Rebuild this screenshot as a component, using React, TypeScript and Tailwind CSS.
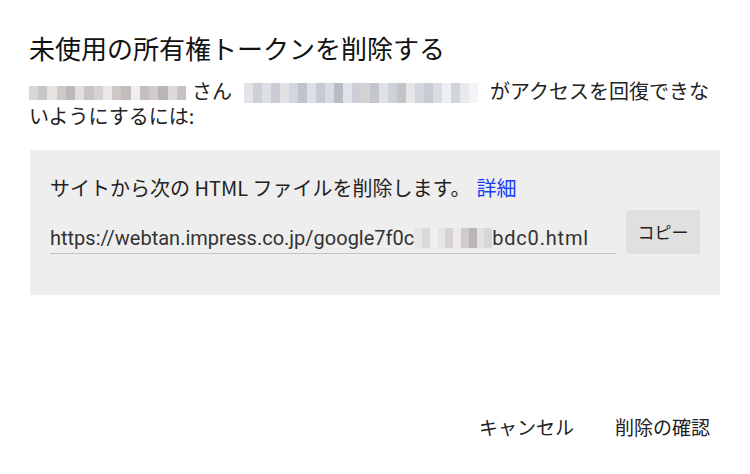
import React from "react";

const cells1 = [
  "bg-[#d9d6d6]","bg-[#c9c6c8]","bg-[#e6e3e3]","bg-[#cfc9c8]","bg-[#bdb9bb]","bg-[#e3dedc]","bg-[#c7c3c6]","bg-[#d6d2d1]","bg-[#ebe9e8]",
  "bg-[#cdc8c4]","bg-[#c2bcbf]","bg-[#f1efee]","bg-[#c4c0c2]","bg-[#d1ccca]","bg-[#b9b4b8]","bg-[#dedad9]","bg-[#c6c1c3]",
];
const cells2 = [
  "bg-[#e4e4e8]","bg-[#cfd0d6]","bg-[#dde0e6]","bg-[#c9ccd3]","bg-[#e2e1e4]","bg-[#d0d5de]","bg-[#bfc3cc]","bg-[#dcdfe5]","bg-[#c5cad4]",
  "bg-[#d8dbe1]","bg-[#b9bcc4]","bg-[#e0e3e8]","bg-[#cccfd6]","bg-[#d5d2d3]","bg-[#c3c6cd]","bg-[#dfe1e6]","bg-[#cdd1d8]","bg-[#c6c3c5]",
  "bg-[#e5e6ea]","bg-[#d2d5dc]","bg-[#c8cbd2]","bg-[#dadde3]","bg-[#eef0f3]","bg-[#d1d4db]","bg-[#e8e9ec]","bg-[#f3f4f6]",
];
const cells3 = [
  "bg-[#e8e6e6]","bg-[#dcd9d9]","bg-[#f0efef]","bg-[#e6e4e4]","bg-[#d6d2d3]","bg-[#ebe9e9]","bg-[#cfcbcc]","bg-[#b9b5b7]","bg-[#e3e1e1]","bg-[#d8d5d6]",
];

function Mosaic({ cells, cls }: { cells: string[]; cls: string }) {
  return (
    <span className={`inline-flex ${cls}`}>
      {cells.map((c, i) => (
        <span key={i} className={`flex-1 h-full ${c}`} />
      ))}
    </span>
  );
}

export default function App() {
  const jp = { fontFamily: '"Noto Sans CJK JP", "Noto Sans", sans-serif' };
  return (
    <div className="w-[750px] h-[474px] bg-white flex flex-col text-[#202124]" style={jp}>
      <div className="pl-[29px] pr-[30px] pt-[30px]">
        <h1 className="text-[26px] leading-[36px] font-normal text-[#111]">
          未使用の所有権トークンを削除する
        </h1>
        <p className="mt-[12px] text-[20px] leading-[25px] text-[#222]">
          <Mosaic cells={cells1} cls="w-[157px] h-[14px] align-[-1px]" />
          <span className="ml-[6px]">さん</span>
          <Mosaic cells={cells2} cls="w-[234px] h-[20px] align-[-4px] ml-[12px] mr-[12px]" />
          がアクセスを回復できないようにするには:
        </p>
      </div>
      <div className="mt-[22px] mx-[30px] h-[145px] bg-[#eeeeee] pl-[20px] pr-[20px] pt-[24px]">
        <p className="text-[20px] leading-[28px] text-[#222]">
          サイトから次の HTML ファイルを削除します。
          <span className="ml-[6px] text-[#1a3cf5]">詳細</span>
        </p>
        <div className="mt-[8px] flex items-start gap-[10px]">
          <div className="w-[566px] border-b border-[#c2c2c2] pt-[15px] pb-[2px]">
            <span
              className="text-[20px] leading-[26px] text-[#333] whitespace-nowrap"
              style={{ fontFamily: 'Roboto, "Liberation Sans", sans-serif' }}
            >
              https://webtan.impress.co.jp/google7f0c
              <Mosaic cells={cells3} cls="w-[78px] h-[20px] align-[-3px]" />
              <span className="tracking-[0.8px]">bdc0.html</span>
            </span>
          </div>
          <div className="w-[74px] h-[44px] rounded-[3px] bg-[#e0e0e0] flex items-center justify-center text-[17px] text-[#222]">
            コピー
          </div>
        </div>
      </div>
      <div className="mt-auto mb-[33px] flex justify-end items-center pr-[40px] gap-[41px] text-[19px] text-[#222]">
        <span>キャンセル</span>
        <span>削除の確認</span>
      </div>
    </div>
  );
}
